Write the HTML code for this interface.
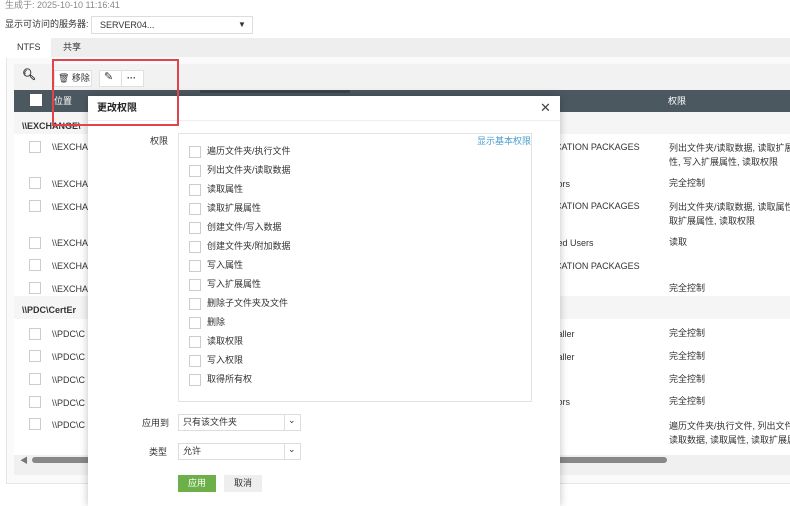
<!DOCTYPE html>
<html><head><meta charset="utf-8"><style>
*{margin:0;padding:0;box-sizing:border-box}
body{width:790px;height:500px;overflow:hidden;background:#fff;font-family:"Liberation Sans","Noto Sans CJK SC",sans-serif;font-size:9px;color:#333;position:relative}
.abs{position:absolute}
.cb{position:absolute;width:12px;height:12px;border:1px solid #ccc;background:#fff}
.t{position:absolute;white-space:nowrap;line-height:11px}
</style></head><body>
<div class="t" style="left:5px;top:0;color:#888;font-size:9px">生成于: 2025-10-10 11:16:41</div>
<div class="t" style="left:5px;top:19px;font-size:9px">显示可访问的服务器:</div>
<div class="abs" style="left:91px;top:16px;width:162px;height:18px;border:1px solid #ddd"></div>
<div class="t" style="left:100px;top:20px;font-size:9px">SERVER04...</div>
<div class="t" style="left:238px;top:19px;font-size:8px">▼</div>
<div class="abs" style="left:6px;top:38px;width:790px;height:446px;border:1px solid #e6e6e6;background:#fafafa"></div>
<div class="abs" style="left:6px;top:38px;width:790px;height:19px;background:#eee"></div>
<div class="abs" style="left:6px;top:38px;width:45px;height:20px;background:#fff"></div>
<div class="t" style="left:17px;top:42px">NTFS</div>
<div class="t" style="left:63px;top:42px">共享</div>
<div class="abs" style="left:14px;top:64px;width:780px;height:26px;background:#f2f2f2"></div>
<div class="t" style="left:22px;top:70px;font-size:11px;font-weight:bold">🔍︎</div>
<div class="abs" style="left:54px;top:70px;width:38px;height:17px;border:1px solid #e0e0e0;background:#fff"></div>
<div class="t" style="left:58px;top:73px">🗑 移除</div>
<div class="abs" style="left:99px;top:70px;width:45px;height:17px;border:1px solid #e0e0e0;background:#fff"></div>
<div class="abs" style="left:121px;top:70px;width:1px;height:17px;background:#e0e0e0"></div>
<div class="t" style="left:104px;top:72px;font-size:11px">✎</div>
<div class="t" style="left:127px;top:73px;font-weight:bold">···</div>
<div class="abs" style="left:14px;top:90px;width:780px;height:22px;background:#4c5860"></div>
<div class="abs" style="left:200px;top:90px;width:150px;height:3px;background:#3a444a"></div>
<div class="cb" style="left:30px;top:94px;width:12px;height:12px;border-color:#fff"></div>
<div class="t" style="left:54px;top:96px;color:#fff">位置</div>
<div class="t" style="left:668px;top:96px;color:#fff">权限</div>
<div class="abs" style="left:14px;top:112px;width:780px;height:22px;background:#f5f5f5"></div>
<div class="t" style="left:22px;top:121px;font-weight:bold">\\EXCHANGE\</div>
<div class="abs" style="left:14px;top:134px;width:780px;height:162px;background:#fff"></div>
<div class="abs" style="left:14px;top:296px;width:780px;height:23px;background:#f5f5f5"></div>
<div class="t" style="left:22px;top:305px;font-weight:bold">\\PDC\CertEr</div>
<div class="abs" style="left:14px;top:319px;width:780px;height:136px;background:#fff"></div>
<div class="cb" style="left:29px;top:141px"></div><div class="t" style="left:52px;top:142px">\\EXCHA</div>
<div class="cb" style="left:29px;top:177px"></div><div class="t" style="left:52px;top:179px">\\EXCHA</div>
<div class="cb" style="left:29px;top:200px"></div><div class="t" style="left:52px;top:202px">\\EXCHA</div>
<div class="cb" style="left:29px;top:237px"></div><div class="t" style="left:52px;top:238px">\\EXCHA</div>
<div class="cb" style="left:29px;top:259px"></div><div class="t" style="left:52px;top:261px">\\EXCHA</div>
<div class="cb" style="left:29px;top:282px"></div><div class="t" style="left:52px;top:284px">\\EXCHA</div>
<div class="cb" style="left:29px;top:328px"></div><div class="t" style="left:52px;top:329px">\\PDC\C</div>
<div class="cb" style="left:29px;top:350px"></div><div class="t" style="left:52px;top:352px">\\PDC\C</div>
<div class="cb" style="left:29px;top:373px"></div><div class="t" style="left:52px;top:375px">\\PDC\C</div>
<div class="cb" style="left:29px;top:396px"></div><div class="t" style="left:52px;top:398px">\\PDC\C</div>
<div class="cb" style="left:29px;top:418px"></div><div class="t" style="left:52px;top:420px">\\PDC\C</div>
<div class="t" style="left:555px;top:142px">CATION PACKAGES</div>
<div class="t" style="left:555px;top:179px">tors</div>
<div class="t" style="left:555px;top:201px">CATION PACKAGES</div>
<div class="t" style="left:555px;top:238px">ted Users</div>
<div class="t" style="left:555px;top:261px">CATION PACKAGES</div>
<div class="t" style="left:555px;top:329px">taller</div>
<div class="t" style="left:555px;top:352px">taller</div>
<div class="t" style="left:555px;top:397px">tors</div>
<div class="t" style="left:669px;top:141px;line-height:14px">列出文件夹/读取数据, 读取扩展属<br>性, 写入扩展属性, 读取权限</div>
<div class="t" style="left:669px;top:178px">完全控制</div>
<div class="t" style="left:669px;top:200px;line-height:14px">列出文件夹/读取数据, 读取属性, 读<br>取扩展属性, 读取权限</div>
<div class="t" style="left:669px;top:237px">读取</div>
<div class="t" style="left:669px;top:283px">完全控制</div>
<div class="t" style="left:669px;top:328px">完全控制</div>
<div class="t" style="left:669px;top:351px">完全控制</div>
<div class="t" style="left:669px;top:374px">完全控制</div>
<div class="t" style="left:669px;top:396px">完全控制</div>
<div class="t" style="left:669px;top:419px;line-height:14px">遍历文件夹/执行文件, 列出文件夹/<br>读取数据, 读取属性, 读取扩展属性,</div>
<div class="abs" style="left:14px;top:455px;width:780px;height:20px;background:#f0f0f0"></div>
<div class="t" style="left:20px;top:455px;font-size:8px;color:#777">◀</div>
<div class="abs" style="left:32px;top:457px;width:635px;height:6px;border-radius:3px;background:#888"></div>
<div class="abs" style="left:88px;top:96px;width:472px;height:410px;background:#fff;box-shadow:0 0 8px rgba(0,0,0,.25)"></div>
<div class="t" style="left:97px;top:103px;font-size:10px;font-weight:bold;color:#222;line-height:12px">更改权限</div>
<div class="t" style="left:540px;top:101px;font-size:13px;color:#444;line-height:13px">✕</div>
<div class="abs" style="left:88px;top:120px;width:472px;height:1px;background:#eee"></div>
<div class="t" style="left:150px;top:136px">权限</div>
<div class="abs" style="left:178px;top:133px;width:354px;height:269px;border:1px solid #e3e3e3"></div>
<div class="t" style="left:477px;top:136px;color:#4a9fcf">显示基本权限</div>
<div class="cb" style="left:189px;top:146px"></div><div class="t" style="left:207px;top:146px">遍历文件夹/执行文件</div>
<div class="cb" style="left:189px;top:165px"></div><div class="t" style="left:207px;top:165px">列出文件夹/读取数据</div>
<div class="cb" style="left:189px;top:184px"></div><div class="t" style="left:207px;top:184px">读取属性</div>
<div class="cb" style="left:189px;top:203px"></div><div class="t" style="left:207px;top:203px">读取扩展属性</div>
<div class="cb" style="left:189px;top:222px"></div><div class="t" style="left:207px;top:222px">创建文件/写入数据</div>
<div class="cb" style="left:189px;top:241px"></div><div class="t" style="left:207px;top:241px">创建文件夹/附加数据</div>
<div class="cb" style="left:189px;top:260px"></div><div class="t" style="left:207px;top:260px">写入属性</div>
<div class="cb" style="left:189px;top:279px"></div><div class="t" style="left:207px;top:279px">写入扩展属性</div>
<div class="cb" style="left:189px;top:298px"></div><div class="t" style="left:207px;top:298px">删除子文件夹及文件</div>
<div class="cb" style="left:189px;top:317px"></div><div class="t" style="left:207px;top:317px">删除</div>
<div class="cb" style="left:189px;top:336px"></div><div class="t" style="left:207px;top:336px">读取权限</div>
<div class="cb" style="left:189px;top:355px"></div><div class="t" style="left:207px;top:355px">写入权限</div>
<div class="cb" style="left:189px;top:374px"></div><div class="t" style="left:207px;top:374px">取得所有权</div>
<div class="t" style="left:142px;top:418px">应用到</div>
<div class="abs" style="left:178px;top:414px;width:123px;height:17px;border:1px solid #ddd"></div>
<div class="abs" style="left:284px;top:414px;width:1px;height:17px;background:#ddd"></div>
<div class="t" style="left:183px;top:417px">只有该文件夹</div>
<div class="t" style="left:288px;top:415px;font-size:9px">⌄</div>
<div class="t" style="left:149px;top:447px">类型</div>
<div class="abs" style="left:178px;top:443px;width:123px;height:17px;border:1px solid #ddd"></div>
<div class="abs" style="left:284px;top:443px;width:1px;height:17px;background:#ddd"></div>
<div class="t" style="left:183px;top:446px">允许</div>
<div class="t" style="left:288px;top:444px;font-size:9px">⌄</div>
<div class="abs" style="left:178px;top:475px;width:38px;height:17px;background:#6db04a"></div>
<div class="t" style="left:188px;top:478px;color:#fff">应用</div>
<div class="abs" style="left:224px;top:475px;width:38px;height:17px;background:#eee"></div>
<div class="t" style="left:234px;top:478px">取消</div>
<div class="abs" style="left:52px;top:59px;width:127px;height:67px;border:2px solid #e0454a"></div>
</body></html>
